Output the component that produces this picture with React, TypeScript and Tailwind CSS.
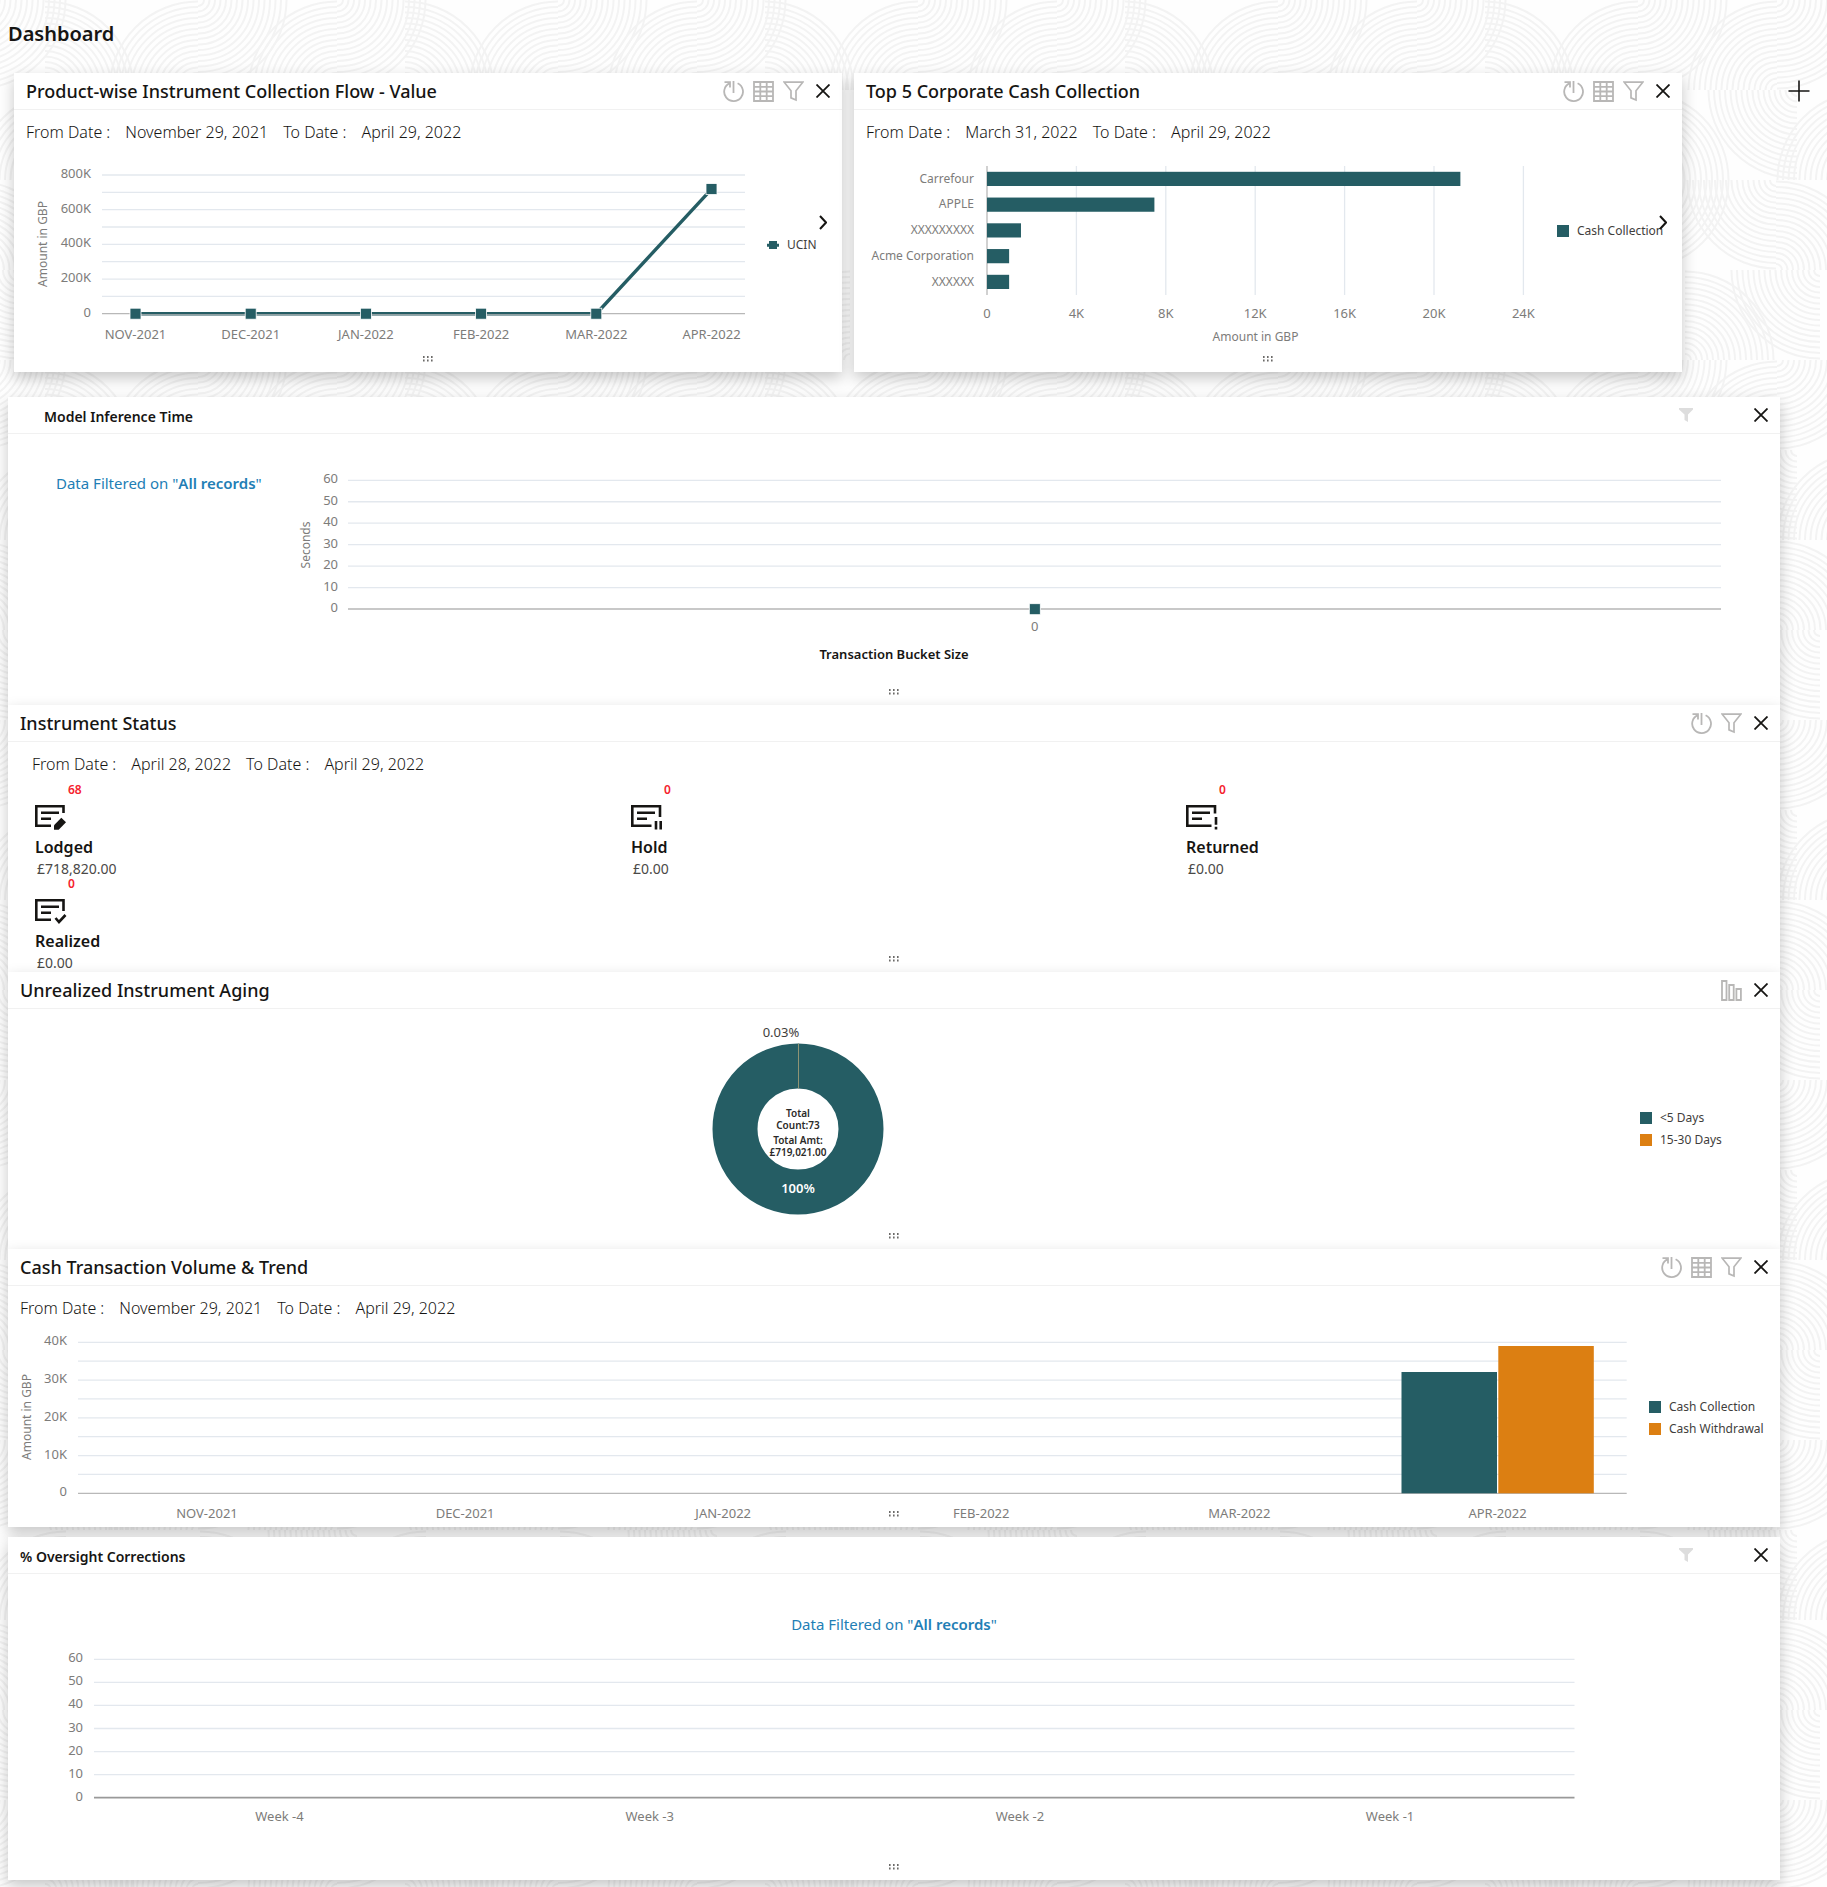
import React from 'react';

const TEAL = '#255d64';
const ORANGE = '#dc7f12';
const AXIS_TEXT = '#7d7c7a';
const GRID = '#e3e8ee';

const MONTHS = ['NOV-2021', 'DEC-2021', 'JAN-2022', 'FEB-2022', 'MAR-2022', 'APR-2022'];

/* ---------- background ---------- */

// [centre x, centre y, direction x, direction y] of each quarter-circle fan in the 360px tile
const FANS: [number, number, number, number][] = [
  [-23, 0, 1, 1], [45, 90, 1, -1], [198, 90, -1, -1], [198, 0, 1, 1], [337, 90, -1, -1], [337, 0, 1, 1],
  [357, 90, -1, 1], [66, 180, -1, -1], [200, 180, 1, -1], [426, 180, -1, -1],
  [336, 180, -1, 1], [336, 270, 1, -1], [200, 180, 1, 1], [-24, 270, 1, -1],
  [20, 270, -1, 1], [380, 270, -1, 1], [245, 360, 1, -1], [130, 360, -1, -1],
];
const RINGS = Array.from({ length: 16 }, (_, i) => 6 + i * 5.5);

const Backdrop = () => (
  <svg className="absolute inset-0 -z-10 h-full w-full" aria-hidden="true">
    <defs>
      <pattern id="waves" width="360" height="360" patternUnits="userSpaceOnUse">
        <g fill="none" stroke="#f3f3f3" strokeWidth="2">
          {FANS.map(([x, y, dx, dy], f) =>
            RINGS.map((r) => (
              <path key={`${f}-${r}`} d={`M${x + dx * r} ${y}A${r} ${r} 0 0 ${dx * dy > 0 ? 1 : 0} ${x} ${y + dy * r}`} />
            ))
          )}
        </g>
      </pattern>
    </defs>
    <rect width="100%" height="100%" fill="url(#waves)" />
  </svg>
);

/* ---------- icons ---------- */

const RefreshIcon = () => (
  <svg width="21" height="21" viewBox="0 0 21 21" fill="none" stroke="#b8b7b6" strokeWidth="1.8">
    <path d="M1.5 1.2H7V6.5M6.8 2.1A9.4 9.4 0 1 0 14.6 2.2M10.5 0V12" />
  </svg>
);

const TableIcon = () => (
  <svg width="21" height="21" viewBox="0 0 21 21" fill="none" stroke="#b8b7b6" strokeWidth="1.8">
    <path d="M1 1H20V20H1ZM1 5.8H20M1 10.5H20M1 15.2H20M7.3 1V20M13.7 1V20" />
  </svg>
);

const FilterIcon = () => (
  <svg width="21" height="21" viewBox="0 0 21 21" fill="none" stroke="#b8b7b6" strokeWidth="1.7">
    <path d="M1.2 1.2H19.8L13 9.8V19L8 16.9V9.8Z" />
  </svg>
);

const SolidFilterIcon = () => (
  <svg width="14" height="14" viewBox="0 0 14 14" fill="#dddddd">
    <path d="M0 0H14V1.5L9 6.5V14L5.5 12V6.5L0 1.5Z" />
  </svg>
);

const BarsIcon = () => (
  <svg width="21" height="21" viewBox="0 0 21 21" fill="none" stroke="#b8b7b6" strokeWidth="1.8">
    <path d="M1 1H5.5V20H1ZM8.2 5H12.7V20H8.2ZM15.4 9H19.9V20H15.4Z" />
  </svg>
);

const CloseIcon = () => (
  <svg width="14" height="14" viewBox="0 0 14 14" fill="none" stroke="#161513" strokeWidth="1.8">
    <path d="M.5.5L13.5 13.5M13.5.5L.5 13.5" />
  </svg>
);

const NOTE_MARKS = {
  lodged: { frame: 'M28.5 9V2.2H1.3V21.8H16', mark: <path d="M19 25.8V21.2L26.3 13.8L31 18.2L23.7 25.8Z" fill="#161513" stroke="none" /> },
  hold: { frame: 'M29 13V2.2H1.3V21.8H20.5', mark: <path d="M25 17V25.5M29.7 17V25.5" /> },
  returned: { frame: 'M29 9.5V2.2H1.3V21.8H25.5', mark: <path d="M30 13V20.8M30 22.8V25.5" /> },
  realized: { frame: 'M28.5 13V2.2H1.3V21.8H16', mark: <path d="M20.5 20L24 24L30.5 17" /> },
};

const NoteIcon = ({ kind }: { kind: keyof typeof NOTE_MARKS }) => (
  <svg width="32" height="26" viewBox="0 0 32 26" fill="none" stroke="#161513" strokeWidth="2.6">
    <path d={NOTE_MARKS[kind].frame} />
    <path d="M6 8.7H24M6 14.7H16" />
    {NOTE_MARKS[kind].mark}
  </svg>
);

/* ---------- shared pieces ---------- */

const ACTIONS = {
  refresh: { label: 'Refresh', icon: RefreshIcon },
  table: { label: 'Table view', icon: TableIcon },
  filter: { label: 'Filter', icon: FilterIcon },
  bars: { label: 'Bar view', icon: BarsIcon },
};

interface CardProps {
  title: string;
  actions?: (keyof typeof ACTIONS)[];
  // small bold title with a solid filter, as the ML widgets have
  compact?: boolean;
  titleClass?: string;
  className?: string;
  children: React.ReactNode;
}

const Card = ({ title, actions = [], compact, titleClass = 'pl-3', className = '', children }: CardProps) => (
  <section className={`relative bg-white shadow-[0_6px_14px_rgba(0,0,0,0.22)] ${className}`}>
    <header className="flex h-[37px] items-center border-b border-[#f1f1f1] pr-1">
      <h2 className={`flex-1 ${titleClass} ${compact ? 'pt-[3px] text-sm font-semibold' : 'text-lg font-medium'}`}>{title}</h2>
      {compact && (
        <button aria-label="Filter" className="mr-[45px] flex h-[30px] w-[30px] items-center justify-center"><SolidFilterIcon /></button>
      )}
      {actions.map((key) => {
        const Icon = ACTIONS[key].icon;
        return (
          <button key={key} aria-label={ACTIONS[key].label} className="flex h-[30px] w-[30px] items-center justify-center"><Icon /></button>
        );
      })}
      <button aria-label="Close" className="flex h-[30px] w-[30px] items-center justify-center"><CloseIcon /></button>
    </header>
    {children}
    <button aria-label="Resize" className="absolute bottom-[10px] left-1/2 -translate-x-1/2">
      <svg width="12" height="6" viewBox="0 0 12 6" fill="#6b6a68">
        {[1, 5, 9].map((x) => <path key={x} d={`M${x} 0h1.6v2h-1.6zM${x} 3.6h1.6v2h-1.6z`} />)}
      </svg>
    </button>
  </section>
);

const DateRange = ({ from, to, className = 'pl-3' }: { from: string; to: string; className?: string }) => (
  <p className={`flex gap-[15px] pt-[10px] text-base font-light leading-6 text-[#161513] ${className}`}>
    <span>From Date :</span>
    <span>{from}</span>
    <span>To Date :</span>
    <span>{to}</span>
  </p>
);

const Legend = ({ items, className = '' }: { items: { label: string; color: string; line?: boolean }[]; className?: string }) => (
  <ul className={`flex shrink-0 flex-col justify-center gap-[2px] text-xs text-[#3f3e3c] ${className}`}>
    {items.map((item) => (
      <li key={item.label} className="flex items-center gap-2 whitespace-nowrap leading-5">
        <svg width="12" height="12" viewBox="0 0 12 12" fill={item.color}>
          {item.line ? <path d="M0 4.7H2V2H10V4.7H12V7.7H10V10H2V7.7H0Z" /> : <path d="M0 0H12V12H0Z" />}
        </svg>
        {item.label}
      </li>
    ))}
  </ul>
);

const NextButton = () => (
  <button aria-label="Next" className="absolute right-[15px] top-[142px]">
    <svg width="8" height="15" viewBox="0 0 8 15" fill="none" stroke="#161513" strokeWidth="2">
      <path d="M1 1L7 7.5L1 14" />
    </svg>
  </button>
);

const FilteredOn = ({ className = '' }: { className?: string }) => (
  <p className={`text-[15px] leading-6 text-[#227eb5] ${className}`}>Data Filtered on "<b className="font-semibold">All records</b>"</p>
);

interface YAxisProps {
  labels: string[];
  x1: number;
  x2: number;
  top: number;
  bottom: number;
  // gridlines per label step
  minor?: number;
  labelX: number;
  axisColor?: string;
  axisWidth?: number;
}

// labels run from the top of the plot down to the axis
const YAxis = ({ labels, x1, x2, top, bottom, minor = 1, labelX, axisColor = '#b8b8b8', axisWidth = 1.3 }: YAxisProps) => {
  const lines = (labels.length - 1) * minor;
  const step = (bottom - top) / lines;
  return (
    <g>
      {Array.from({ length: lines + 1 }, (_, i) => (
        <path
          key={i}
          d={`M${x1} ${top + i * step}H${x2}`}
          stroke={i === lines ? axisColor : GRID}
          strokeWidth={i === lines ? axisWidth : 1.3}
        />
      ))}
      {labels.map((label, i) => (
        <text key={label} x={labelX} y={top + i * minor * step + 3} textAnchor="end">{label}</text>
      ))}
    </g>
  );
};

const Chart = ({ w, h, label, children }: { w: number; h: number; label: string; children: React.ReactNode }) => (
  <svg viewBox={`0 0 ${w} ${h}`} role="img" aria-label={label} fontSize="13" fill={AXIS_TEXT} className="min-w-0 flex-1 overflow-visible">
    {children}
  </svg>
);

/* ---------- widgets ---------- */

const CollectionFlow = () => {
  const values = [0, 0, 0, 0, 0, 718820];
  const points = values.map((v, i) => [109.5 + i * 115.2, 163.7 - (v / 800000) * 138.7]);
  return (
    <Card title="Product-wise Instrument Collection Flow - Value" actions={['refresh', 'table', 'filter']} className="min-w-0 flex-1">
      <DateRange from="November 29, 2021" to="April 29, 2022" />
      <div className="mt-[6px] flex pb-8 pl-3">
        <Chart w={734} h={190} label="Collection flow by month">
          <YAxis labels={['800K', '600K', '400K', '200K', '0']} minor={2} x1={76} x2={719} top={25} bottom={163.7} labelX={65} />
          <text transform="translate(21 94) rotate(-90)" textAnchor="middle" fontSize="12">Amount in GBP</text>
          <polyline points={points.map((p) => p.join(',')).join(' ')} fill="none" stroke={TEAL} strokeWidth="3.4" />
          <path d="M109.5 164.6H570.3" stroke="#8f9fa2" strokeWidth="1.4" />
          {points.map(([x, y], i) => (
            <g key={MONTHS[i]}>
              <rect x={x - 5.5} y={y - 5.5} width="11" height="11" fill={TEAL} stroke="#fff" strokeWidth="0.8" />
              <text x={x} y="189" textAnchor="middle">{MONTHS[i]}</text>
            </g>
          ))}
        </Chart>
        <Legend className="w-[82px] pl-[7px]" items={[{ label: 'UCIN', color: TEAL, line: true }]} />
      </div>
      <NextButton />
    </Card>
  );
};

const TopCorporates = () => {
  const rows: [string, number][] = [
    ['Carrefour', 21180],
    ['APPLE', 7490],
    ['XXXXXXXXX', 1520],
    ['Acme Corporation', 990],
    ['XXXXXX', 990],
  ];
  const unit = 89.4 / 4000;
  return (
    <Card title="Top 5 Corporate Cash Collection" actions={['refresh', 'table', 'filter']} className="min-w-0 flex-1">
      <DateRange from="March 31, 2022" to="April 29, 2022" />
      <div className="mt-[6px] flex pb-[26px] pl-3">
        <Chart w={681} h={196} label="Top corporates by cash collection">
          {['0', '4K', '8K', '12K', '16K', '20K', '24K'].map((label, i) => (
            <g key={label}>
              <path d={`M${121 + i * 89.4} 16V145`} stroke={i === 0 ? '#b8b8b8' : GRID} strokeWidth="1.3" />
              <text x={121 + i * 89.4} y="168" textAnchor="middle">{label}</text>
            </g>
          ))}
          {rows.map(([name, value], i) => (
            <g key={name}>
              <rect x="121" y={21.8 + i * 25.75} width={value * unit} height="14.2" fill={TEAL} />
              <text x="108" y={32.7 + i * 25.75} textAnchor="end" fontSize="12">{name}</text>
            </g>
          ))}
          <text x="389.5" y="191" textAnchor="middle" fontSize="12">Amount in GBP</text>
        </Chart>
        <Legend className="mt-[71px] w-[135px] self-start pl-[10px]" items={[{ label: 'Cash Collection', color: TEAL }]} />
      </div>
      <NextButton />
    </Card>
  );
};

const ModelInference = () => (
  <Card title="Model Inference Time" compact titleClass="pl-9">
    <div className="flex pr-12 pt-8">
      <FilteredOn className="mt-[5px] w-[284px] shrink-0 pl-12" />
      <Chart w={1440} h={172} label="Model inference time">
        <YAxis labels={['60', '50', '40', '30', '20', '10', '0']} x1={56} x2={1429} top={14.3} bottom={143} labelX={46} axisColor="#c8c8c8" axisWidth={2} />
        <text transform="translate(18 79) rotate(-90)" textAnchor="middle" fontSize="12">Seconds</text>
        <rect x="737.3" y="137.7" width="11" height="11" fill={TEAL} stroke="#fff" strokeWidth="0.8" />
        <text x="742.8" y="165" textAnchor="middle">0</text>
      </Chart>
    </div>
    <p className="mt-[6px] pb-[41px] text-center text-[13px] font-semibold leading-5">Transaction Bucket Size</p>
  </Card>
);

const STATUSES: { label: string; count: number; amount: string; kind: keyof typeof NOTE_MARKS }[] = [
  { label: 'Lodged', count: 68, amount: '£718,820.00', kind: 'lodged' },
  { label: 'Hold', count: 0, amount: '£0.00', kind: 'hold' },
  { label: 'Returned', count: 0, amount: '£0.00', kind: 'returned' },
  { label: 'Realized', count: 0, amount: '£0.00', kind: 'realized' },
];

const InstrumentStatus = () => (
  <Card title="Instrument Status" actions={['refresh', 'filter']}>
    <DateRange from="April 28, 2022" to="April 29, 2022" className="pl-6" />
    <ul className="mt-[7px] grid grid-cols-[596fr_555fr_594fr] pb-px pl-[27px]">
      {STATUSES.map((s) => (
        <li key={s.label}>
          <div className="pl-[33px] text-xs font-semibold leading-[14px] text-[#f5222d]">{s.count}</div>
          <div className="mt-[7px] h-[26px]"><NoteIcon kind={s.kind} /></div>
          <div className="mt-[7px] text-base font-semibold leading-5">{s.label}</div>
          <div className="mt-1 pl-[2px] text-sm leading-4 text-[#4a4947]">{s.amount}</div>
        </li>
      ))}
    </ul>
  </Card>
);

const InstrumentAging = () => (
  <Card title="Unrealized Instrument Aging" actions={['bars']}>
    <div className="flex py-[5px]">
      <div className="flex flex-1 justify-center">
        <svg width="230" height="230" viewBox="0 0 230 230" role="img" aria-label="Unrealized instruments by age" fontSize="13" fill="#3f3e3c" textAnchor="middle">
          <circle cx="115" cy="115" r="63" fill="none" stroke={TEAL} strokeWidth="45" />
          <path d="M115.5 29.5V74.5" stroke="#8f9474" strokeWidth="1" />
          <text x="98" y="23">0.03%</text>
          <text x="115" y="179" fontWeight="600" fill="#fff">100%</text>
          <g fontSize="10" fontWeight="600" fill="#2b2a28">
            <text x="115" y="103">Total</text>
            <text x="115" y="115">Count:73</text>
            <text x="115" y="130">Total Amt:</text>
            <text x="115" y="142">£719,021.00</text>
          </g>
        </svg>
      </div>
      <Legend className="w-[192px] pl-[52px]" items={[{ label: '<5 Days', color: TEAL }, { label: '15-30 Days', color: ORANGE }]} />
    </div>
  </Card>
);

const CashTrend = () => (
  <Card title="Cash Transaction Volume & Trend" actions={['refresh', 'table', 'filter']}>
    <DateRange from="November 29, 2021" to="April 29, 2022" />
    <div className="mt-[5px] flex pl-[6px]">
      <Chart w={1625} h={202} label="Cash collection and withdrawal by month">
        <YAxis labels={['40K', '30K', '20K', '10K', '0']} minor={2} x1={64} x2={1612.7} top={17.3} bottom={168.3} labelX={53} />
        <text transform="translate(17 92) rotate(-90)" textAnchor="middle" fontSize="12">Amount in GBP</text>
        <rect x="1387.5" y="47" width="95.5" height="121.3" fill={TEAL} />
        <rect x="1484.3" y="21" width="95.5" height="147.3" fill={ORANGE} />
        {MONTHS.map((m, i) => (
          <text key={m} x={193 + i * 258.1} y="193" textAnchor="middle">{m}</text>
        ))}
      </Chart>
      <Legend className="w-[141px] pb-4 pl-[10px]" items={[{ label: 'Cash Collection', color: TEAL }, { label: 'Cash Withdrawal', color: ORANGE }]} />
    </div>
  </Card>
);

const OversightCorrections = () => (
  <Card title="% Oversight Corrections" compact className="mt-[10px]">
    <FilteredOn className="pt-[38px] text-center" />
    <div className="mt-2 flex pb-[46px] pl-12 pr-[194px]">
      <Chart w={1530} h={190} label="Oversight corrections by week">
        <YAxis labels={['60', '50', '40', '30', '20', '10', '0']} x1={38} x2={1518.5} top={15.3} bottom={153.7} labelX={27} axisColor="#999999" axisWidth={1.8} />
        {['Week -4', 'Week -3', 'Week -2', 'Week -1'].map((wk, i) => (
          <text key={wk} x={223.5 + i * 370.2} y="177" textAnchor="middle">{wk}</text>
        ))}
      </Chart>
    </div>
  </Card>
);

const App: React.FC = () => (
  <div className="relative isolate min-h-screen overflow-hidden bg-[#fefefe] pb-[7px] pl-2 font-['Noto_Sans',sans-serif] text-[#161513]">
    <Backdrop />
    <h1 className="h-[73px] pt-5 text-xl font-semibold leading-7">Dashboard</h1>
    <div className="flex">
      <main className="min-w-0 flex-1">
        <div className="mb-[25px] ml-[6px] mr-[98px] flex gap-3">
          <CollectionFlow />
          <TopCorporates />
        </div>
        <ModelInference />
        <InstrumentStatus />
        <InstrumentAging />
        <CashTrend />
        <OversightCorrections />
      </main>
      <aside className="w-[47px] shrink-0 pl-2 pt-[7px]">
        <button aria-label="Add widget">
          <svg width="22" height="22" viewBox="0 0 22 22" fill="none" stroke="#161513" strokeWidth="1.6">
            <path d="M11 .5V21.5M.5 11H21.5" />
          </svg>
        </button>
      </aside>
    </div>
  </div>
);

export default App;
